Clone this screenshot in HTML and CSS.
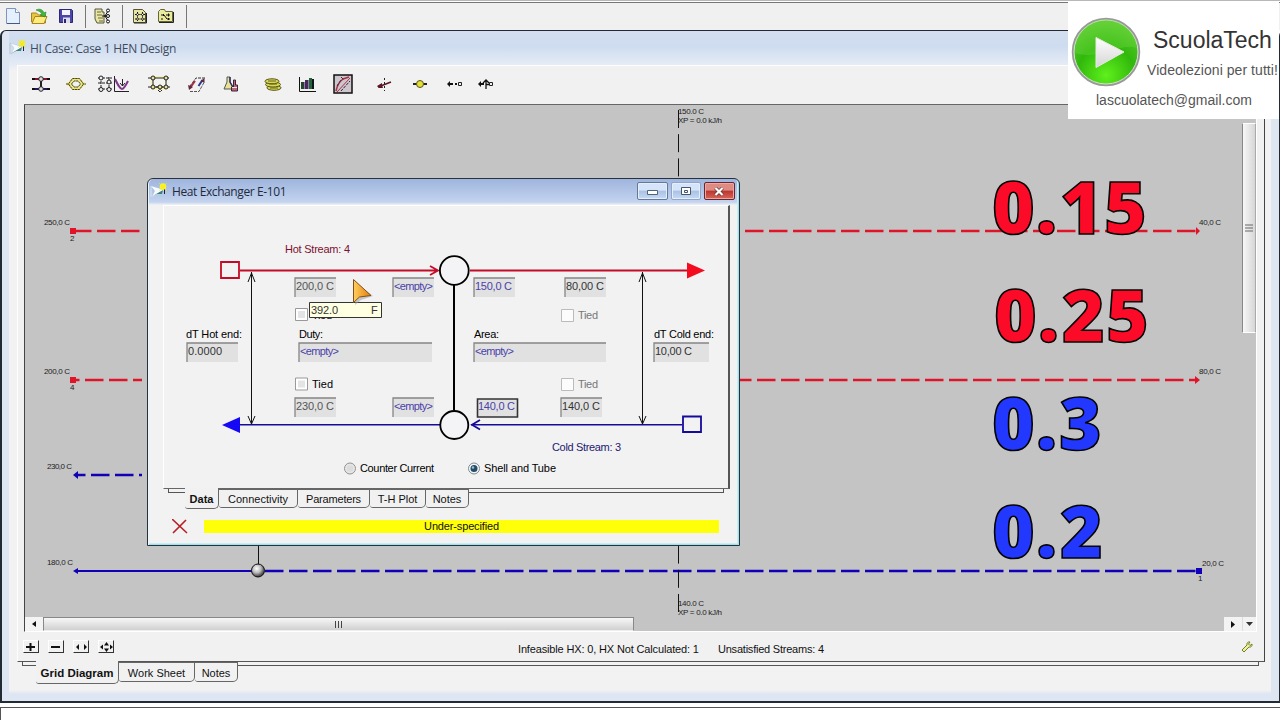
FILE: index.html
```html
<!DOCTYPE html>
<html lang="en">
<head>
<meta charset="utf-8">
<title>HI Case: Case 1 HEN Design</title>
<link rel="stylesheet" href="styles.css">
</head>
<body>
<div class="app">
  <header class="app-bar">
    <svg class="ico i-new" width="14" height="16"><path d="M.5 .5h9l4 4v11H.5z" fill="#e4efff" stroke="#7f93bd"/><path d="M9.500 .5v4h4" fill="#fff" stroke="#7f93bd"/><path d="M1 15.500h13" stroke="#46597f"/></svg>
    <svg class="ico i-open" width="17" height="16"><path d="M.5 14V5h5l2 2h7v8z" fill="#e9c63e" stroke="#a8841c"/><path d="M1 15.500l3-7h12l-3 7z" fill="#fdeb7e" stroke="#a8841c"/><path d="M5 2c4-2 7 0 8 3l2-1-1 5-5-2 2-1c-1-2-3-3-6-4z" fill="#43b63b" stroke="#23832a" stroke-width=".6"/></svg>
    <svg class="ico i-save" width="14" height="14"><path d="M.5 .5h12l1 1v12H.5z" fill="#4b46a8" stroke="#2c2875"/><path d="M3 1h8v5H3z" fill="#f4f4ff"/><path d="M4 8.500h7V14H4z" fill="#dcdcec"/><path d="M5 10h2v4H5z" fill="#29246c"/></svg>
    <i class="sep s1"></i>
    <svg class="ico i-tree" width="16" height="16"><path d="M1 1h7v3h2v11H3l-2-4z" fill="#e8e6a4" stroke="#55553a"/><path d="M3 4h4M3 7h5M4 10h5M5 13h4" stroke="#68683a"/><path d="M8 8h3l3-5M11 8l3 5M10 8h5" stroke="#111" fill="none"/><g fill="#fff" stroke="#111"><circle cx="14" cy="2.500" r="1.500"/><circle cx="14" cy="8" r="1.500"/><circle cx="14" cy="13.500" r="1.500"/></g></svg>
    <i class="sep s2"></i>
    <svg class="ico i-doc" width="14" height="15"><path d="M.5 .5h9l3 3v10H.5z" fill="#e8e6a4" stroke="#55553a"/><path d="M1 14h12.500V4" fill="none" stroke="#222"/><path d="M4.500 3v9M9.500 3v9M2 5.500h10M2 10h10" stroke="#111" stroke-dasharray="2 .7"/><g fill="#fff" stroke="#111" stroke-width=".7"><circle cx="4.500" cy="5.500" r="1"/><circle cx="9.500" cy="5.500" r="1"/><circle cx="4.500" cy="10" r="1"/><circle cx="9.500" cy="10" r="1"/></g></svg>
    <svg class="ico i-fold" width="16" height="14"><path d="M.5 12.500v-10l2-2h4l1 2h7v10z" fill="#ecea9c" stroke="#65653a"/><path d="M1 13.500h14.500V3" stroke="#222" fill="none"/><path d="M3 6h3l3 4h3M3 10h2M8 6h4" stroke="#111" fill="none"/><path d="M5.500 5v2M10.500 4.500v3M10.500 9v2" stroke="#111"/></svg>
    <i class="sep s3"></i>
  </header>

  <main class="window">
    <div class="window-title">
      <svg width="17" height="16" viewBox="0 0 17 16"><path d="M1 3l13 4L2 14l3-6z" fill="#f7fbff" stroke="#b5c6d2" stroke-width=".5"/><path d="M1 14l12-7-1 4-5 0z" fill="#3f817d"/><path d="M1 3v11" stroke="#b9cbd8"/><path d="M14.500 6v5" stroke="#223"/><circle cx="13" cy="3.500" r="3.200" fill="#f4ee25"/><path d="M9 0l8 8M17 0L9 8" stroke="#e8de42" stroke-width=".6"/></svg>
      <span class="t-main">HI Case: Case 1 HEN Design</span>
    </div>
    <div class="panel">
      <div class="tools">
        <svg class="t1" width="18" height="16"><path d="M0 3h18" stroke="#8b1230" stroke-width="2"/><path d="M0 13h18" stroke="#211a5e" stroke-width="2"/><path d="M9 4v8" stroke="#222" stroke-width="2"/><path d="M0 3h3M15 3h3M0 13h3M15 13h3" stroke="#111" stroke-width="2"/><circle cx="9" cy="3" r="2.300" fill="#ddd" stroke="#222"/><circle cx="9" cy="13" r="2.300" fill="#ddd" stroke="#222"/></svg>
        <svg class="t2" width="20" height="14"><path d="M1 7h2l4-4.500h6l4 4.500h2M3 7l4 4.500h6l4-4.500" fill="none" stroke="#ece67c" stroke-width="3"/><path d="M0 7h2.500l4-5.500h7l4 5.500H20M2.500 7l4 5.500h7l4-5.500M5.500 7l2.500-3h4l2.500 3-2.500 3H8z" fill="none" stroke="#45431b" stroke-dasharray="2.500 .5"/></svg>
        <svg class="t3" width="32" height="18"><path d="M0 3h14M0 8h14M0 14h14M3 2v13M11 2v13" stroke="#222" stroke-dasharray="3 1"/><g fill="#eee" stroke="#222"><circle cx="3" cy="3" r="2"/><circle cx="11" cy="7" r="2"/><circle cx="3" cy="14.500" r="2"/><circle cx="11" cy="14.500" r="2"/></g><path d="M16.500 1v15.500H31" fill="none" stroke="#222"/><path d="M17 4c3 6 5 10 7 10s4-4 6-8" fill="none" stroke="#80368b" stroke-width="2"/><path d="M24.500 4v7M22 8l2.500 3L27 8" stroke="#222" fill="none"/></svg>
        <svg class="t4" width="22" height="18"><path d="M3 1h16v14H3z" fill="#f5f1b6"/><path d="M5 3h13v9H5z" fill="#f2f2ee" stroke="#222"/><path d="M0 3h4M18 3h4M0 12h22M12 12v5M10 15l2 2 2-2" fill="none" stroke="#222" stroke-dasharray="3 1"/><g fill="#e6dfa0" stroke="#222"><circle cx="5" cy="3" r="2"/><circle cx="18" cy="3" r="2"/><circle cx="5" cy="12" r="2"/><circle cx="12" cy="12" r="2"/><circle cx="18" cy="12" r="2"/></g></svg>
        <svg class="t5" width="18" height="17"><path d="M2 10l6-8h9" fill="none" stroke="#333" stroke-dasharray="3 1"/><path d="M2 15.500h9l5-9" fill="none" stroke="#555" stroke-dasharray="3 1"/><path d="M2 12l5-7" stroke="#a52e43" stroke-width="2"/><path d="M10.500 10l4-6" stroke="#283a8c" stroke-width="2"/><path d="M0 9l1 5 4-3zM16.500 2v5l-4-2z" fill="#602843"/></svg>
        <svg class="t6" width="16" height="16"><path d="M4 1h3v5l4 7H1l3-7z" fill="#e7e48b" stroke="#54545a"/><path d="M7 1v5l4 7" stroke="#30306c" fill="none" stroke-width="1.500"/><path d="M10.500 4h2v5h2v6H8.500v-4h2z" fill="#b56b7a" stroke="#40233a"/><path d="M9 11.500h5" stroke="#f4dfe5"/></svg>
        <svg class="t7" width="18" height="13"><g fill="#d9d756" stroke="#545414"><ellipse cx="10" cy="9.800" rx="7" ry="2.500"/><ellipse cx="9" cy="6.500" rx="7.500" ry="2.500"/><ellipse cx="8" cy="3.300" rx="7" ry="2.500"/></g><path d="M4 3h8M5 6h8M6 10h8" stroke="#65651c"/></svg>
        <svg class="t8" width="18" height="15"><path d="M.5 0v14.500H17" fill="none" stroke="#111"/><path d="M2 5h3v7H2z" fill="#24452b"/><path d="M6 3h3v9H6z" fill="#4a265e"/><path d="M10 1h3v11h-3z" fill="#236336"/><path d="M13 2h2v10h-2z" fill="#131320"/><path d="M5.500 5v7M9.500 3v9" stroke="#8f80ab"/></svg>
        <svg class="t9" width="20" height="20"><path d="M1 1h18v18H1z" fill="#cdc6cd" stroke="#111" stroke-width="1.500"/><path d="M3 17c1-5 3-9 7-12l6-2" fill="none" stroke="#a83246" stroke-width="1.500"/><path d="M4 18L17 4" stroke="#a83246"/><path d="M4 12l4-6M8 3l3 3M8 17l9-10" fill="none" stroke="#35273c" stroke-dasharray="3 1"/></svg>
        <svg class="t10" width="15" height="13"><path d="M1 9l13-5" stroke="#5b1524" stroke-width="1.500"/><path d="M0 8l5-3v2l1 3H2z" fill="#5b1524"/><path d="M7.500 0v13" stroke="#222" stroke-dasharray="2 2"/></svg>
        <svg class="t11" width="14" height="10"><path d="M0 5h14" stroke="#222" stroke-width="2"/><circle cx="7" cy="5" r="3.500" fill="#e5df36" stroke="#57551a"/></svg>
        <svg class="t12" width="16" height="8"><path d="M0 4l3-3v6zM2 3h4v2H2zM8 3h2v2H8z" fill="#111"/><path d="M11.500 2.500h3v3h-3z" fill="none" stroke="#222"/></svg>
        <svg class="t13" width="16" height="12"><path d="M0 6l3-3v6zM2 5h4v2H2z" fill="#111"/><path d="M8 11V2M5 5l3-3 3 3M8 6.500h3" fill="none" stroke="#111" stroke-width="1.300"/><path d="M11.500 4.500h3v3h-3z" fill="none" stroke="#222"/></svg>
      </div>

      <div class="canvas">
        <svg class="diagram" viewBox="25 105 1217 512" width="1217" height="512">
          <g fill="none" stroke="#e01428" stroke-width="2.500" stroke-dasharray="18.500 5.500">
            <path d="M73 231H142M673 231H1196"/><path d="M73 380H142M673 380H1198" stroke-dashoffset="12"/>
          </g>
          <g fill="#e01428"><path d="M70 228h6v6h-6zM70 377h6v6h-6z"/><path d="M1196 227l4 4-4 4zM1195 376l5 4-5 4z"/></g>
          <g fill="none" stroke="#1200b8" stroke-width="2.500"><path d="M76 475H142" stroke-dasharray="18.500 5.500" stroke-dashoffset="9"/><path d="M76 571H258" stroke-width="1.800"/><path d="M265 571H1196" stroke-dasharray="18.500 5.500"/></g>
          <path d="M73 475l5-4v8zM73 571l5-3v6zM1196 568h6v6h-6z" fill="#1200b8"/>
          <path d="M678.500 110V612" stroke="#111" stroke-dasharray="18 6.200"/>
          <path d="M258.500 540v25" stroke="#111"/>
          <radialGradient id="ball" cx=".4" cy=".35" r=".65"><stop offset="0" stop-color="#fff"/><stop offset=".5" stop-color="#bbb"/><stop offset="1" stop-color="#333"/></radialGradient>
          <circle cx="258" cy="570.500" r="6.500" fill="url(#ball)" stroke="#111"/>
          <g class="tiny">
            <text x="44" y="225" textLength="26">250,0 C</text><text x="70" y="241">2</text>
            <text x="44" y="374" textLength="26">200,0 C</text><text x="70" y="390">4</text>
            <text x="47" y="469" textLength="25">230,0 C</text>
            <text x="47" y="565" textLength="26">180,0 C</text>
            <text x="1199" y="225" textLength="22">40,0 C</text>
            <text x="1199" y="374" textLength="22">80,0 C</text>
            <text x="1202" y="566" textLength="22">20,0 C</text><text x="1198" y="581">1</text>
            <text x="678" y="114" textLength="26">150.0 C</text><text x="678" y="122.500" textLength="44">XP = 0.0 kJ/h</text>
            <text x="678" y="606" textLength="26">140.0 C</text><text x="678" y="614.500" textLength="44">XP = 0.0 kJ/h</text>
          </g>
          <g class="big red">
            <text y="234" x="992 1036 1060 1104">0.15</text>
            <text y="342" x="994 1038 1062 1106">0.25</text>
          </g>
          <g class="big blue">
            <text y="450" x="992 1036 1059">0.3</text>
            <text y="558" x="992 1036 1060">0.2</text>
          </g>
        </svg>
        <div class="vscroll"><i class="vthumb"><svg width="8" height="9"><path d="M0 1h8M0 4h8M0 7h8" stroke="#666"/></svg></i></div>
        <div class="hscroll">
          <i class="btn"><svg width="4" height="6"><path d="M4 0v6L0 3z" fill="#111"/></svg></i>
          <i class="hthumb"><svg width="9" height="7"><path d="M1.500 0v7M4.500 0v7M7.500 0v7" stroke="#444"/></svg></i>
          <i class="btn r"><svg width="4" height="7"><path d="M0 0v7l4-3.500z" fill="#111"/></svg></i>
        </div>
        <i class="btn d"><svg width="7" height="4"><path d="M0 0h7L3.500 4z" fill="#333"/></svg></i>
      </div>

      <div class="status">
        <i class="zb"><svg width="10" height="8"><path d="M0 4h9M4.500 0v8" stroke="#111" stroke-width="2"/></svg></i>
        <i class="zb"><svg width="10" height="8"><path d="M0 4h9" stroke="#111" stroke-width="2"/></svg></i>
        <i class="zb"><svg width="13" height="8"><path d="M4 1v6L1 4zM9 1v6l3-3z" fill="#111"/></svg></i>
        <i class="zb"><svg width="13" height="10"><path d="M3 2.500v5L0 5zM10 2.500v5L13 5zM4 3.500h5L6.500 0zM4 6.500h5L6.500 10z" fill="#111"/></svg></i>
        <span class="st a">Infeasible HX: 0, HX Not Calculated: 1</span>
        <span class="st b">Unsatisfied Streams: 4</span>
        <svg class="wrench" width="12" height="12"><path d="M1 9l5-5c-.5-2 1-3.500 3-3l-1.500 2 1.500 1.500 2-1.500c.5 2-1 3.500-3 3l-5 5z" fill="#eef0a0" stroke="#737f20"/></svg>
      </div>
    </div>
    <div class="tabs main-tabs"><i class="edge"></i><b class="tab on">Grid Diagram</b><span class="tab w2">Work Sheet</span><span class="tab w3">Notes</span><i class="edge grow"></i></div>
  </main>
  <footer class="trace"></footer>
</div>

<section class="dialog">
  <div class="dlg-title">
    <svg width="17" height="16" viewBox="0 0 17 16"><path d="M1 3l13 4L2 14l3-6z" fill="#f7fbff"/><path d="M1 14l12-7-1 4-5 0z" fill="#3f817d"/><path d="M1 3v11" stroke="#d9e6f2"/><path d="M14.500 6v5" stroke="#223"/><circle cx="13" cy="3.500" r="3.300" fill="#fbf421"/><path d="M9 0l8 8M17 0L9 8" stroke="#f0e632" stroke-width=".6"/></svg>
    <span class="t-dlg">Heat Exchanger E-101</span>
    <i class="wb"><svg class="min" width="12" height="6"><path d="M.5 .5h10v4H.5z" fill="#fff" stroke="#52637c"/></svg></i>
    <i class="wb dim"><svg width="11" height="9"><path d="M.5 .5h9v7h-9z" fill="#fff" stroke="#45566f"/><path d="M3.500 3.500h3v2h-3z" fill="none" stroke="#45566f"/></svg></i>
    <i class="wb close"><svg width="11" height="9"><path d="M1.500 1l7 7M8.500 1l-7 7" stroke="#5d3030" stroke-width="3.500"/><path d="M1.500 1l7 7M8.500 1l-7 7" stroke="#fff" stroke-width="2.200"/></svg></i>
  </div>
  <div class="dlg-page">
    <svg viewBox="164 206 564 282" width="564" height="282">
      <defs>
        <g id="chk"><path d="M.5 .5h12v12H.5z" fill="#fff" stroke="#999"/><path d="M3 3h7v7H3z" fill="#e2e4e6"/></g>
        <linearGradient id="cur" x2="1"><stop offset="0" stop-color="#ffcf5b"/><stop offset="1" stop-color="#e47b10"/></linearGradient>
      </defs>
      <g fill="none" stroke="#111"><path d="M251.500 272v152M248 282l3.500-9 3.500 9M248 416l3.500 8 3.500-8"/><path d="M642.500 272v152M639 282l3.500-9 3.500 9M639 416l3.500 8 3.500-8"/></g>
      <path d="M454 284v126" stroke="#000" stroke-width="2"/>
      <g fill="none" stroke="#c40a26" stroke-width="1.800"><path d="M240 270.500H438M430 266l8 4.500-8 4.500"/><path d="M470 270.500H688"/><path d="M221 262h18v16h-18z"/></g>
      <path d="M687 262.500v16l18-8z" fill="#f40c1e"/>
      <g fill="none" stroke="#140a9c" stroke-width="1.800"><path d="M240 424.800H440" stroke-width="1.500"/><path d="M471 424.800H682" stroke-width="1.500"/><path d="M480 420l-8 4.800 8 4.800"/><path d="M683 416.500h18v15.500h-18z"/></g>
      <path d="M240 417v16l-18-8z" fill="#1508f4"/>
      <g fill="#f4f4f6" stroke="#000" stroke-width="1.800"><circle cx="454.300" cy="270.500" r="14.400"/><circle cx="454.300" cy="425" r="14"/></g>

      <g fill="#e1e1e2">
        <path d="M295 278h41v19h-41zM393 278h41v19h-41zM474 278h41v19h-41zM565 278h41v19h-41z"/>
        <path d="M187 343h51v19h-51zM299 343h133v19H299zM474 343h132v19H474zM654 343h55v19h-55z"/>
        <path d="M295 398h41v19h-41zM393 398h41v19h-41zM561 398h41v19h-41z"/>
      </g>
      <g fill="none" stroke="#858585" stroke-width="1.300">
        <path d="M295 297v-19h41M393 297v-19h41M474 297v-19h41M565 297v-19h41"/>
        <path d="M187 362v-19h51M299 362v-19h133M474 362v-19h132M654 362v-19h55"/>
        <path d="M295 417v-19h41M393 417v-19h41M561 417v-19h41"/>
      </g>
      <path d="M477.500 399h40v18h-40z" fill="#e1e1e2" stroke="#333" stroke-width="1.600"/>
      <use href="#chk" x="295" y="308"/><use href="#chk" x="295" y="377.500"/>
      <path d="M561.500 309.500h12v12h-12zM561.500 378.500h12v12h-12z" fill="#fcfcfc" stroke="#bbb"/>

      <g class="lbl">
        <text x="285" y="253" textLength="65" fill="#7d1030">Hot Stream: 4</text>
        <text x="552" y="451" textLength="69" fill="#241a70">Cold Stream: 3</text>
        <text x="186" y="338" textLength="56">dT Hot end:</text>
        <text x="299" y="338" textLength="24">Duty:</text>
        <text x="474" y="338" textLength="25">Area:</text>
        <text x="654" y="338" textLength="60">dT Cold end:</text>
        <text x="312" y="319" textLength="20">Tied</text>
        <text x="312" y="388" textLength="21">Tied</text>
        <text x="578" y="319" textLength="20" fill="#777">Tied</text>
        <text x="578" y="388" textLength="20" fill="#777">Tied</text>
        <g fill="#555"><text x="296" y="290" textLength="38">200,0 C</text><text x="296" y="410" textLength="38">230,0 C</text></g>
        <g fill="#333"><text x="566" y="290" textLength="38">80,00 C</text><text x="562" y="410" textLength="38">140,0 C</text><text x="188" y="355" textLength="34">0.0000</text><text x="655" y="355" textLength="37">10,00 C</text></g>
        <g fill="#4a42a8"><text x="394" y="290" textLength="39">&lt;empty&gt;</text><text x="394" y="410" textLength="39">&lt;empty&gt;</text><text x="300" y="355" textLength="39">&lt;empty&gt;</text><text x="475" y="355" textLength="39">&lt;empty&gt;</text><text x="475" y="290" textLength="37">150,0 C</text><text x="478" y="410" textLength="37">140,0 C</text></g>
        <text x="360" y="472" textLength="74">Counter Current</text>
        <text x="484" y="472" textLength="72">Shell and Tube</text>
      </g>
      <circle cx="350" cy="468.500" r="5.500" fill="#e6e6e6" stroke="#929292"/><circle cx="350" cy="468.500" r="3.300" fill="#dcdcdc"/>
      <circle cx="474" cy="468.500" r="5.500" fill="#f2f6f8" stroke="#7d8b94"/><circle cx="474" cy="468.500" r="3.500" fill="#264b65"/><circle cx="473" cy="467.500" r="1.200" fill="#91c5da"/>
      <path d="M309.500 302.500h72v15h-72z" fill="#ffffe1" stroke="#333"/>
      <g class="lbl" fill="#333"><text x="311" y="314" textLength="27">392.0</text><text x="371" y="314">F</text></g>
      <path d="M355 282v23l6-5 12-4z" fill="#999" opacity=".5"/>
      <path d="M353.500 279.500v23l6-5.500 11.500-1.500z" fill="url(#cur)" stroke="#80501c"/>
    </svg>
  </div>
  <div class="tabs dlg-tabs"><i class="edge"></i><b class="tab on">Data</b><span class="tab d2">Connectivity</span><span class="tab d3">Parameters</span><span class="tab d4">T-H Plot</span><span class="tab d5">Notes</span><i class="edge grow"></i></div>
  <div class="dlg-foot">
    <svg width="16" height="15"><path d="M0 0l15 14M14 1L1 14" stroke="#b81e24" stroke-width="1.600"/></svg>
    <div class="warn">Under-specified</div>
  </div>
</section>

<aside class="brand">
  <svg width="70" height="70" viewBox="0 0 70 70">
    <defs><radialGradient id="gb" cx=".5" cy=".85" r=".8"><stop offset="0" stop-color="#5ff01c"/><stop offset=".55" stop-color="#31b80c"/><stop offset="1" stop-color="#5ccb30"/></radialGradient><linearGradient id="pl" x2="0" y2="1"><stop offset="0" stop-color="#fff"/><stop offset="1" stop-color="#d5d5d5"/></linearGradient></defs>
    <circle cx="35" cy="35" r="33" fill="url(#gb)" stroke="#999" stroke-width="2.500"/><circle cx="35" cy="35" r="32" fill="none" stroke="#cfe5c8" stroke-width="1"/>
    <path d="M4 36a31 31 0 0 1 62-5C50 25 30 44 4 36z" fill="#78dd4a" opacity=".3"/>
    <path d="M25 20.500v30L53 35z" fill="url(#pl)" stroke="#e8e8e8" stroke-linejoin="round"/>
  </svg>
  <div class="brand-text"><span class="b1">ScuolaTech</span><span class="b2">Videolezioni per tutti!</span></div>
  <span class="b3">lascuolatech@gmail.com</span>
</aside>
</body>
</html>
```
FILE: styles.css
```css
* { box-sizing: border-box; }
body { margin: 0; width: 1280px; height: 720px; overflow: hidden; position: relative; background: #fff; font-family: "Liberation Sans", Arial, sans-serif; font-size: 11px; color: #111; }
svg { display: block; flex: none; }
i { font-style: normal; flex: none; }
.app { display: flex; flex-direction: column; height: 720px; }

.app-bar { height: 30px; display: flex; align-items: center; padding: 1px 0 0 6px; background: #f0f0f1; border-top: 1px solid #b8b8b8; box-shadow: inset 0 1px #fff, inset 0 2px #777; }
.i-open { margin-left: 11px; }
.i-save { margin-left: 11px; }
.sep { width: 1px; height: 23px; background: #777; }
.s1 { margin-left: 12px; }
.i-tree { margin-left: 8px; }
.s2 { margin-left: 12px; }
.i-doc { margin-left: 10px; }
.i-fold { margin-left: 11px; }
.s3 { margin-left: 12px; }

.window { height: 673px; display: flex; flex-direction: column; border: 1px solid #222a33; border-width: 1px 1px 2px 2px; border-radius: 6px 6px 0 0; padding: 0 14px 0 15px; background: linear-gradient(90deg, #dfe6f3 7px, transparent 7px), linear-gradient(270deg, #dee6f2 8px, transparent 8px), linear-gradient(0deg, #dde6f2 7px, transparent 11px), linear-gradient(#d3dfef 0, #cedcf0 15px, #e4ebf5 33px, #f2f2f3 40px); }
.window-title { height: 34px; display: flex; align-items: center; gap: 4px; margin-left: -8px; }
.t-main, .t-dlg { font-family: "Open Sans", sans-serif; font-size: 12px; white-space: nowrap; color: #3d4b5e; }
.t-main { letter-spacing: -.3px; }
.panel { height: 597px; background: #f1f1f2; border: 1px solid #fdfdfd; border-right: 1px solid #444; border-bottom: 1px solid #555; padding: 0 7px 0 6px; }
.tools { height: 38px; display: flex; align-items: center; padding: 0 0 2px 8px; }
.t2 { margin-left: 16px; }
.t3 { margin-left: 12px; }
.t4 { margin-left: 18px; }
.t5 { margin-left: 18px; }
.t6 { margin-left: 17px; }
.t7 { margin-left: 25px; }
.t8 { margin-left: 17px; }
.t9 { margin-left: 16px; }
.t10 { margin-left: 24px; }
.t11 { margin-left: 21px; }
.t12 { margin-left: 20px; }
.t13 { margin-left: 15px; }

.canvas { height: 528px; display: grid; grid-template: 512px 14px / 1217px 14px; border: 1px solid #fff; border-top-color: #666; border-left-color: #444; background: #c4c4c4; }
.tiny { font-size: 8px; fill: #222; }
.big { font-family: "Open Sans", sans-serif; font-weight: 800; font-size: 73px; stroke: #000; stroke-width: 1.6px; }
.red { fill: #fb0b27; }
.blue { fill: #2238ff; }
.vscroll { padding-top: 18px; }
.vthumb { height: 210px; display: flex; align-items: center; justify-content: center; background: linear-gradient(90deg, #f7f7f7, #d6d6d6); border: 1px solid #8c8c8c; border-color: #fff #aaa #fff #888; }
.hscroll { display: flex; }
.btn { width: 18px; height: 14px; display: flex; align-items: center; justify-content: center; background: #f3f3f3; }
.btn.r { margin-left: auto; }
.btn.d { width: 14px; border-left: 1px solid #ddd; }
.hthumb { width: 591px; display: flex; align-items: center; justify-content: center; background: linear-gradient(#f7f7f7, #d0d0d0); border: 1px solid #888; border-bottom-color: #eee; }

.status { height: 29px; display: flex; align-items: center; padding-top: 4px; }
.zb { width: 16px; height: 13px; margin: -4px 9px 0 -1px; display: flex; align-items: center; justify-content: center; border: 1px solid #fff; border-right-color: #333; border-bottom-color: #333; }
.zb + .zb { margin-left: 0; }
.st { font-size: 11px; white-space: nowrap; }
.st.a { margin-left: 395px; width: 200px; letter-spacing: -.15px; }
.st.b { letter-spacing: -.22px; }
.wrench { margin-left: auto; margin-right: 4px; margin-top: -4px; }

.tabs { display: flex; align-items: flex-start; white-space: nowrap; }
.edge { height: 4px; border-bottom: 1px solid #555; border-left: 1px solid #555; }
.edge.grow { flex: 1; border-left: 0; border-right: 1px solid #555; }
.tab { height: 19px; display: flex; align-items: center; justify-content: center; padding-top: 1px; background: #f1f1f2; border: 1px solid #666; border-left: 0; border-radius: 0 0 5px 3px; }
.tab.on { height: 23px; margin-top: -1px; border-top: 0; }
.main-tabs { padding: 0 6px 0 5px; height: 26px; }
.main-tabs .tab { height: 20px; }
.main-tabs .edge:first-child { width: 14px; }
.main-tabs .on { width: 83px; height: 23px; font-size: 11.5px; letter-spacing: 0; }
.w2 { width: 76px; }
.w3 { width: 43px; }
.trace { flex: 1; border-top: 1px solid #555; border-left: 1px solid #555; margin-top: 4px; background: #fff; }

.dialog { position: absolute; left: 147px; top: 178px; width: 593px; height: 368px; border: 1px solid #29313b; border-radius: 6px 6px 0 0; background: linear-gradient(#9fb5dd 0, #c3d3ef 23px, #f2f2f3 26px); padding: 0 9px 0 15px; box-shadow: inset 1px 0 #e9f8fc, inset -1px -1px #9fe0ee, inset -2px -2px #c6eef5; }
.dlg-title { height: 26px; display: flex; align-items: center; margin: 0 -5px 0 -13px; padding-bottom: 2px; }
.t-dlg { color: #1e2a3c; margin-left: 5px; margin-right: auto; letter-spacing: -.4px; }
.wb { width: 31px; height: 18px; margin-left: 3px; display: flex; align-items: center; justify-content: center; border: 1px solid #64789d; border-radius: 2px; background: linear-gradient(#d5e4f8 45%, #a9c1e3 50%, #c5dbf4); box-shadow: inset 0 0 0 1px #e5effc; }
.min { margin-top: 4px; }
.wb.dim { width: 30px; border-color: #91a5cb; }
.close { border-color: #6b2431; background: linear-gradient(#dd8b83 45%, #bb3530 50%, #d76757); box-shadow: inset 0 0 0 1px #e9aaa3; }
.dlg-page { height: 284px; width: 567px; border: 1px solid #fff; border-right: 2px solid #555; border-bottom: 1px solid #666; background: #f2f2f3; }
.lbl { font-size: 11px; }
.dlg-tabs { margin: 0 6px 0 5px; height: 26px; }
.dlg-tabs .edge:first-child { width: 17px; }
.dlg-tabs .on { width: 34px; height: 21px; }
.d2 { width: 79px; }
.d3 { width: 72px; letter-spacing: -.2px; }
.d4 { width: 56px; }
.d5 { width: 43px; }
.dlg-foot { display: flex; align-items: center; gap: 16px; padding-left: 9px; height: 23px; }
.warn { width: 515px; height: 13px; line-height: 13px; background: #ffff0a; text-align: center; letter-spacing: -.15px; }

.brand { position: absolute; left: 1068px; top: 1px; width: 211px; height: 118px; background: #fff; display: grid; grid-template: 91px 1fr / 76px 1fr; padding-left: 3px; color: #333; white-space: nowrap; }
.brand > svg { margin-top: 16px; }
.brand-text { display: flex; flex-direction: column; padding-top: 26px; }
.b1 { font-size: 23px; line-height: 26px; margin-left: 6px; }
.b2 { font-size: 14px; line-height: 16px; margin-top: 9px; color: #555; letter-spacing: .05px; }
.b3 { grid-column: 1 / 3; font-size: 14px; line-height: 16px; margin-left: 25px; color: #555; }
```
